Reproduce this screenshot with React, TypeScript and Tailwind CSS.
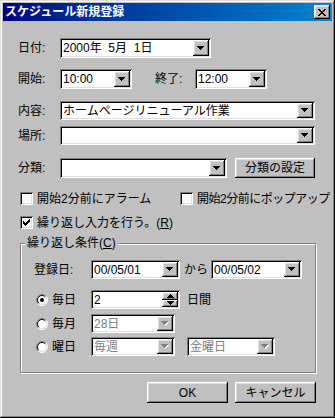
import React from "react";

const raised =
  "shadow-[inset_-1px_-1px_#000,inset_1px_1px_#fff,inset_-2px_-2px_#808080,inset_2px_2px_#dfdfdf]";
const sunken =
  "shadow-[inset_1px_1px_#808080,inset_-1px_-1px_#fff,inset_2px_2px_#000,inset_-2px_-2px_#dfdfdf]";

const Arrow = ({ down = true, disabled = false }: { down?: boolean; disabled?: boolean }) => (
  <svg width="8" height="5" viewBox="0 0 8 5" shapeRendering="crispEdges">
    {disabled && (
      <g fill="#fff" transform="translate(1 1)">
        <rect x="0" y="0" width="7" height="1" />
        <rect x="1" y="1" width="5" height="1" />
        <rect x="2" y="2" width="3" height="1" />
        <rect x="3" y="3" width="1" height="1" />
      </g>
    )}
    <g fill={disabled ? "#808080" : "#000"} transform={down ? "" : "translate(0 4) scale(1 -1)"}>
      <rect x="0" y="0" width="7" height="1" />
      <rect x="1" y="1" width="5" height="1" />
      <rect x="2" y="2" width="3" height="1" />
      <rect x="3" y="3" width="1" height="1" />
    </g>
  </svg>
);

interface ComboProps {
  className: string;
  text?: string;
  disabled?: boolean;
}

const Combo = ({ className, text = "", disabled = false }: ComboProps) => (
  <div className={`flex bg-white p-[2px] ${sunken} ${className}`}>
    <div
      className={`flex-1 flex items-center pl-[1px] whitespace-pre ${
        disabled ? "text-[#808080]" : "text-black"
      }`}
    >
      {text}
    </div>
    <div className={`w-[16px] h-full bg-[#c0c0c0] flex items-center justify-center ${raised}`}>
      <Arrow disabled={disabled} />
    </div>
  </div>
);

const Spin = ({ className, text }: { className: string; text: string }) => (
  <div className={`flex bg-white p-[2px] ${sunken} ${className}`}>
    <div className="flex-1 flex items-center pl-[1px]">{text}</div>
    <div className="w-[16px] h-full flex flex-col">
      <div className={`flex-1 bg-[#c0c0c0] flex items-center justify-center ${raised}`}>
        <svg width="7" height="4" viewBox="0 0 7 4" shapeRendering="crispEdges">
          <rect x="3" y="0" width="1" height="1" />
          <rect x="2" y="1" width="3" height="1" />
          <rect x="1" y="2" width="5" height="1" />
          <rect x="0" y="3" width="7" height="1" />
        </svg>
      </div>
      <div className={`flex-1 bg-[#c0c0c0] flex items-center justify-center ${raised}`}>
        <svg width="7" height="4" viewBox="0 0 7 4" shapeRendering="crispEdges">
          <rect x="0" y="0" width="7" height="1" />
          <rect x="1" y="1" width="5" height="1" />
          <rect x="2" y="2" width="3" height="1" />
          <rect x="3" y="3" width="1" height="1" />
        </svg>
      </div>
    </div>
  </div>
);

const Button = ({ className, children }: { className: string; children: React.ReactNode }) => (
  <div className={`flex items-center justify-center bg-[#c0c0c0] ${raised} ${className}`}>
    {children}
  </div>
);

const Checkbox = ({ checked = false }: { checked?: boolean }) => (
  <div className={`w-[13px] h-[13px] shrink-0 bg-white flex items-center justify-center ${sunken}`}>
    {checked && (
      <svg width="7" height="7" viewBox="0 0 7 7" shapeRendering="crispEdges">
        <path d="M0 2h1v1h1v1h1v-1h1v-1h1v-1h1v-1h1v3h-1v1h-1v1h-1v1h-1v1h-1v-1h-1v-1h-1z" />
      </svg>
    )}
  </div>
);

const Radio = ({ checked = false }: { checked?: boolean }) => (
  <svg width="12" height="12" viewBox="0 0 12 12">
    <circle cx="6" cy="6" r="5" fill="#fff" />
    <path d="M2.1 9.9A5.5 5.5 0 0 1 9.9 2.1" fill="none" stroke="#808080" strokeWidth="1" />
    <path d="M9.9 2.1A5.5 5.5 0 0 1 2.1 9.9" fill="none" stroke="#fff" strokeWidth="1" />
    <path d="M2.8 9.2A4.5 4.5 0 0 1 9.2 2.8" fill="none" stroke="#000" strokeWidth="1" />
    <path d="M9.2 2.8A4.5 4.5 0 0 1 2.8 9.2" fill="none" stroke="#dfdfdf" strokeWidth="1" />
    {checked && <circle cx="6" cy="6" r="2" fill="#000" />}
  </svg>
);

export default function App() {
  return (
    <div
      className={`w-[335px] h-[418px] bg-[#c0c0c0] flex flex-col whitespace-nowrap text-[12px] leading-[14px] text-black font-['Liberation_Sans','Noto_Sans_CJK_JP',sans-serif] shadow-[inset_-1px_-1px_#000,inset_1px_1px_#dfdfdf,inset_-2px_-2px_#808080,inset_2px_2px_#fff]`}
    >
      {/* title bar */}
      <div className="mx-[3px] mt-[3px] h-[18px] flex items-center justify-between bg-gradient-to-r from-[#000080] to-[#1084d0]">
        <span className="pl-[2px] text-white font-bold text-[12px]">スケジュール新規登録</span>
        <div className={`w-[16px] h-[14px] mr-[2px] bg-[#c0c0c0] flex items-center justify-center ${raised}`}>
          <svg width="8" height="7" viewBox="0 0 8 7" shapeRendering="crispEdges">
            <path d="M0 0h2v1h1v1h2v-1h1v-1h2v1h-1v1h-1v1h-1v1h1v1h1v1h1v1h-2v-1h-1v-1h-2v1h-1v1h-2v-1h1v-1h1v-1h1v-1h-1v-1h-1v-1h-1z" />
          </svg>
        </div>
      </div>

      {/* date */}
      <div className="flex items-center mt-[17px] h-[20px]">
        <span className="w-[60px] pl-[18px]">日付:</span>
        <Combo className="w-[151px] h-[20px]" text="2000年  5月  1日" />
      </div>

      {/* start / end */}
      <div className="flex items-center mt-[11px] h-[20px]">
        <span className="w-[60px] pl-[18px]">開始:</span>
        <Combo className="w-[72px] h-[20px]" text="10:00" />
        <span className="w-[40px] ml-[23px]">終了:</span>
        <Combo className="w-[72px] h-[20px]" text="12:00" />
      </div>

      <div className="flex items-center mt-[12px] h-[19px]">
        <span className="w-[60px] pl-[18px]">内容:</span>
        <Combo className="w-[255px] h-[19px]" text="ホームページリニューアル作業" />
      </div>

      <div className="flex items-center mt-[6px] h-[19px]">
        <span className="w-[60px] pl-[18px]">場所:</span>
        <Combo className="w-[255px] h-[19px]" />
      </div>

      <div className="flex items-center mt-[13px] h-[20px]">
        <span className="w-[60px] pl-[18px]">分類:</span>
        <Combo className="w-[167px] h-[20px]" />
        <Button className="ml-[8px] w-[80px] h-[20px]">分類の設定</Button>
      </div>

      {/* alarms */}
      <div className="flex items-center mt-[14px] h-[13px]">
        <div className="w-[180px] shrink-0 pl-[20px] flex items-center gap-[4px]">
          <Checkbox />
          <span>開始2分前にアラーム</span>
        </div>
        <div className="flex items-center gap-[4px]">
          <Checkbox />
          <span className="tracking-[-0.5px]">開始2分前にポップアップ</span>
        </div>
      </div>

      <div className="flex items-center mt-[11px] h-[13px] pl-[20px] gap-[4px]">
        <Checkbox checked />
        <span>
          繰り返し入力を行う。(<span className="underline">R</span>)
        </span>
      </div>

      {/* repeat group */}
      <div className="relative ml-[20px] mt-[14px] w-[296px] h-[130px] border border-[#808080] shadow-[inset_1px_1px_#fff,1px_1px_#fff] flex flex-col">
        <span className="absolute left-[4px] -top-[8px] px-[2px] bg-[#c0c0c0]">
          繰り返し条件(<span className="underline">C</span>)
        </span>

        <div className="flex items-center mt-[16px] h-[19px]">
          <span className="w-[70px] pl-[13px]">登録日:</span>
          <Combo className="w-[89px] h-[19px]" text="00/05/01" />
          <span className="w-[31px] pl-[4px]">から</span>
          <Combo className="w-[91px] h-[19px]" text="00/05/02" />
        </div>

        <div className="flex items-center mt-[11px] h-[19px]">
          <div className="w-[70px] pl-[15px] flex items-center gap-[4px]">
            <Radio checked />
            <span>毎日</span>
          </div>
          <Spin className="w-[89px] h-[19px]" text="2" />
          <span className="ml-[7px]">日間</span>
        </div>

        <div className="flex items-center mt-[5px] h-[19px]">
          <div className="w-[70px] pl-[15px] flex items-center gap-[4px]">
            <Radio />
            <span>毎月</span>
          </div>
          <Combo className="w-[84px] h-[19px]" text="28日" disabled />
        </div>

        <div className="flex items-center mt-[4px] h-[19px]">
          <div className="w-[70px] pl-[15px] flex items-center gap-[4px]">
            <Radio />
            <span>曜日</span>
          </div>
          <Combo className="w-[84px] h-[19px]" text="毎週" disabled />
          <Combo className="ml-[12px] w-[88px] h-[19px]" text="金曜日" disabled />
        </div>
      </div>

      {/* buttons */}
      <div className="flex mt-[9px] pl-[147px] gap-[7px]">
        <Button className="w-[81px] h-[21px]">OK</Button>
        <Button className="w-[81px] h-[21px]">キャンセル</Button>
      </div>
    </div>
  );
}
